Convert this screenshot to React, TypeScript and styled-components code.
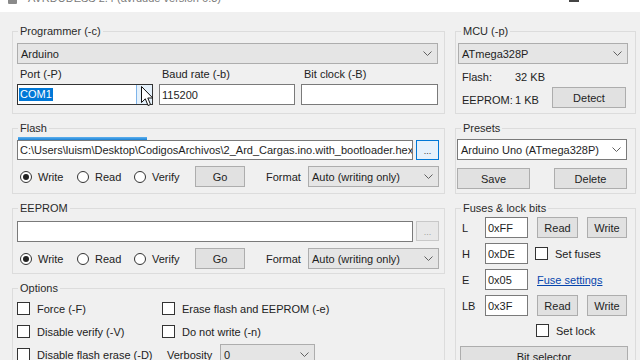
import React from 'react';
import styled, { createGlobalStyle } from 'styled-components';

const GlobalStyle = createGlobalStyle`
  html, body {
    margin: 0;
    padding: 0;
    background: #f0f0f0;
  }
  body {
    font-family: 'Liberation Sans', Arial, sans-serif;
    font-size: 11px;
    color: #222;
  }
`;

const Chevron: React.FC = () => (
  <ChevronSvg width='9' height='6' viewBox='0 0 9 6'>
    <path d='M0.5 0.5 L4.5 4.5 L8.5 0.5' fill='none' stroke='#606060' strokeWidth='1' />
  </ChevronSvg>
);

const Cursor: React.FC = () => (
  <CursorSvg width='13' height='21' viewBox='0 0 13 21'>
    <path
      d='M0.5 0.5 L0.5 16.5 L4.3 12.8 L7 19.5 L9.5 18.5 L6.8 12 L11.8 12 Z'
      fill='#fff'
      stroke='#111'
      strokeWidth='1'
      strokeLinejoin='round'
    />
  </CursorSvg>
);

const Radio: React.FC<{ checked?: boolean; label: string; w: number }> = ({ checked, label, w }) => (
  <RadioItem $w={w}>
    <Circle>{checked && <Dot />}</Circle>
    <span>{label}</span>
  </RadioItem>
);

const Check: React.FC<{ label: string; gap?: number }> = ({ label, gap }) => (
  <CheckItem $gap={gap}>
    <Box />
    <span>{label}</span>
  </CheckItem>
);

const OperationRow: React.FC = () => (
  <OptRow>
    <Radio checked label='Write' w={57} />
    <Radio label='Read' w={57} />
    <Radio label='Verify' w={61} />
    <Button $w={50}>Go</Button>
    <FormatLabel>Format</FormatLabel>
    <Combo $grow>
      Auto (writing only)
      <Chevron />
    </Combo>
  </OptRow>
);

const App: React.FC = () => {
  return (
    <Window>
      <GlobalStyle />
      <TitleBar>
        <AppIcon />
        <TitleText>AVRDUDESS 2.4 (avrdude version 6.3)</TitleText>
        <WinControls>
          <Minimize />
          <CloseGlyph>✕</CloseGlyph>
        </WinControls>
      </TitleBar>

      <Layout>
        <Group $col={1} $rows='1'>
          <Legend>Programmer (-c)</Legend>
          <Content $pad='5px 6px 0 4px'>
            <Combo>
              Arduino
              <Chevron />
            </Combo>
            <FieldRow>
              <div>
                <FieldLabel>Port (-P)</FieldLabel>
                <PortBox>
                  <Selected>COM1</Selected>
                  <DropButton />
                </PortBox>
              </div>
              <div>
                <FieldLabel>Baud rate (-b)</FieldLabel>
                <TextBox $h={21}>115200</TextBox>
              </div>
              <div>
                <FieldLabel>Bit clock (-B)</FieldLabel>
                <TextBox $h={21} />
              </div>
            </FieldRow>
          </Content>
        </Group>

        <Group $col={2} $rows='1'>
          <Legend>MCU (-p)</Legend>
          <Content $pad='5px 7px 0 2px'>
            <Combo>
              ATmega328P
              <Chevron />
            </Combo>
            <InfoArea>
              <InfoGrid>
                <span>Flash:</span>
                <span>32 KB</span>
                <span>EEPROM:</span>
                <span>1 KB</span>
              </InfoGrid>
              <DetectButton $w={74}>Detect</DetectButton>
            </InfoArea>
          </Content>
        </Group>

        <Group $col={1} $rows='2'>
          <Legend>Flash</Legend>
          <Content $pad='2px 5px 0 4px'>
            <Progress />
            <PathRow>
              <TextBox $grow>C:\Users\luism\Desktop\CodigosArchivos\2_Ard_Cargas.ino.with_bootloader.hex</TextBox>
              <Browse $focused>...</Browse>
            </PathRow>
            <OperationRow />
          </Content>
        </Group>

        <Group $col={2} $rows='2'>
          <Legend>Presets</Legend>
          <Content $pad='4px 8px 0 1px'>
            <Combo $white>
              Arduino Uno (ATmega328P)
              <Chevron />
            </Combo>
            <ButtonRow>
              <Button $w={73}>Save</Button>
              <Button $w={73}>Delete</Button>
            </ButtonRow>
          </Content>
        </Group>

        <Group $col={1} $rows='3'>
          <Legend>EEPROM</Legend>
          <Content $pad='6px 5px 0 4px'>
            <PathRow>
              <TextBox $grow $h={21} />
              <Browse>...</Browse>
            </PathRow>
            <OperationRow />
          </Content>
        </Group>

        <Group $col={2} $rows='3 / span 2'>
          <Legend>Fuses &amp; lock bits</Legend>
          <Content $pad='2px 7px 0 6px'>
            <FuseRows>
              <FuseRow>
                <FuseLabel>L</FuseLabel>
                <TextBox $w={43} $h={21}>0xFF</TextBox>
                <Button $w={41} $ml={9}>Read</Button>
                <Button $w={40} $ml={9}>Write</Button>
              </FuseRow>
              <FuseRow>
                <FuseLabel>H</FuseLabel>
                <TextBox $w={43} $h={21}>0xDE</TextBox>
                <FuseExtra $ml={7}>
                  <Check label='Set fuses' gap={7} />
                </FuseExtra>
              </FuseRow>
              <FuseRow>
                <FuseLabel>E</FuseLabel>
                <TextBox $w={43} $h={21}>0x05</TextBox>
                <FuseExtra $ml={9}>
                  <Link>Fuse settings</Link>
                </FuseExtra>
              </FuseRow>
              <FuseRow>
                <FuseLabel>LB</FuseLabel>
                <TextBox $w={43} $h={21}>0x3F</TextBox>
                <Button $w={41} $ml={9}>Read</Button>
                <Button $w={40} $ml={9}>Write</Button>
              </FuseRow>
            </FuseRows>
            <LockRow>
              <Check label='Set lock' gap={7} />
            </LockRow>
            <BitSelector>Bit selector</BitSelector>
          </Content>
        </Group>

        <Group $col={1} $rows='4'>
          <Legend>Options</Legend>
          <Content $pad='5px 6px 0 4px'>
            <OptionsGrid>
              <Check label='Force (-F)' />
              <Check label='Erase flash and EEPROM (-e)' />
              <Check label='Disable verify (-V)' />
              <Check label='Do not write (-n)' />
              <Check label='Disable flash erase (-D)' />
              <Verbosity>
                <VerbosityLabel>Verbosity</VerbosityLabel>
                <Combo $w={95}>
                  0
                  <Chevron />
                </Combo>
              </Verbosity>
            </OptionsGrid>
          </Content>
        </Group>
      </Layout>

      <Cursor />
    </Window>
  );
};

const Window = styled.div`
  position: relative;
  width: 640px;
  height: 360px;
  overflow: hidden;
  background: #f0f0f0;
`;

const TitleBar = styled.div`
  height: 12px;
  background: #ffffff;
  display: flex;
  align-items: flex-start;
  overflow: hidden;
  padding-left: 8px;
`;

const AppIcon = styled.div`
  width: 9px;
  height: 10px;
  margin-top: -6px;
  background: #8a8a8a;
  border-radius: 1px;
`;

const TitleText = styled.span`
  margin-top: -9px;
  margin-left: 11px;
  line-height: 14px;
  font-size: 11px;
  color: #7a7a7a;
  white-space: nowrap;
`;

const WinControls = styled.div`
  margin-left: auto;
  display: flex;
  align-items: flex-start;
  padding-right: 12px;
`;

const Minimize = styled.div`
  width: 10px;
  height: 2px;
  background: #444;
`;

const CloseGlyph = styled.span`
  margin-left: 38px;
  margin-top: -10px;
  font-size: 13px;
  line-height: 14px;
  color: #999;
`;

const Layout = styled.div`
  display: grid;
  grid-template-columns: 433px 181px;
  grid-template-rows: 89px 72px 72px 90px;
  column-gap: 10px;
  row-gap: 8px;
  padding: 13px 0 0 12px;
`;

const Group = styled.fieldset<{ $rows: string; $col: number }>`
  margin: 0;
  padding: 0;
  min-width: 0;
  border: 1px solid #dcdcdc;
  grid-column: ${(p) => p.$col};
  grid-row: ${(p) => p.$rows};
`;

const Legend = styled.legend`
  margin-left: 5px;
  padding: 0 2px;
  font-size: 11px;
  line-height: 13px;
  color: #2a2a2a;
`;

const Content = styled.div<{ $pad: string }>`
  display: flex;
  flex-direction: column;
  padding: ${(p) => p.$pad};
`;

const ChevronSvg = styled.svg`
  flex-shrink: 0;
  margin-right: 5px;
`;

const CursorSvg = styled.svg`
  position: absolute;
  left: 141px;
  top: 86px;
`;

const Combo = styled.div<{ $white?: boolean; $grow?: boolean; $w?: number }>`
  box-sizing: border-box;
  height: 21px;
  ${(p) => (p.$grow ? 'flex: 1;' : '')}
  ${(p) => (p.$w ? `width: ${p.$w}px;` : '')}
  border: 1px solid ${(p) => (p.$white ? '#7a7a7a' : '#adadad')};
  background: ${(p) => (p.$white ? '#ffffff' : '#e5e5e5')};
  display: flex;
  align-items: center;
  justify-content: space-between;
  padding-left: 3px;
  white-space: nowrap;
  color: #1e1e1e;
`;

const TextBox = styled.div<{ $w?: number; $h?: number; $grow?: boolean }>`
  box-sizing: border-box;
  height: ${(p) => p.$h ?? 20}px;
  ${(p) => (p.$w ? `width: ${p.$w}px; flex-shrink: 0;` : '')}
  ${(p) => (p.$grow ? 'flex: 1; min-width: 0;' : '')}
  border: 1px solid #7a7a7a;
  background: #ffffff;
  display: flex;
  align-items: center;
  padding: 0 2px;
  white-space: nowrap;
  overflow: hidden;
  color: #1e1e1e;
`;

const FieldRow = styled.div`
  display: grid;
  grid-template-columns: 136px 136px 1fr;
  column-gap: 6px;
  margin-top: 4px;
`;

const FieldLabel = styled.div`
  line-height: 13px;
  padding-left: 3px;
  margin-bottom: 3px;
`;

const PortBox = styled.div`
  box-sizing: border-box;
  height: 21px;
  border: 1px solid #333;
  background: #fff;
  display: flex;
  align-items: center;
  padding-left: 1px;
`;

const Selected = styled.span`
  background: #0078d7;
  color: #fff;
  padding: 0 1px;
  line-height: 13px;
`;

const DropButton = styled.div`
  margin-left: auto;
  width: 16px;
  height: 100%;
  box-sizing: border-box;
  border-left: 1px solid #7eb4ea;
  background: #e5f1fb;
`;

const InfoArea = styled.div`
  display: flex;
  justify-content: space-between;
  margin-top: 7px;
`;

const InfoGrid = styled.div`
  display: grid;
  grid-template-columns: 53px auto;
  row-gap: 8px;
  padding-left: 4px;
  line-height: 13px;
`;

const Button = styled.div<{ $w?: number; $ml?: number }>`
  box-sizing: border-box;
  height: 21px;
  ${(p) => (p.$w ? `width: ${p.$w}px;` : '')}
  margin-left: ${(p) => p.$ml ?? 0}px;
  flex-shrink: 0;
  border: 1px solid #adadad;
  background: #e1e1e1;
  display: flex;
  align-items: center;
  justify-content: center;
  color: #1e1e1e;
`;

const DetectButton = styled(Button)`
  margin-top: 16px;
  margin-right: 2px;
`;

const Progress = styled.div`
  width: 129px;
  height: 3px;
  margin-left: 1px;
  background: linear-gradient(#5fb0ee, #1c84d6);
`;

const PathRow = styled.div`
  display: flex;
  gap: 3px;
`;

const Browse = styled.div<{ $focused?: boolean }>`
  box-sizing: border-box;
  width: 23px;
  height: 20px;
  flex-shrink: 0;
  border: 1px solid ${(p) => (p.$focused ? '#0078d7' : '#c8c8c8')};
  background: ${(p) => (p.$focused ? '#e5f1fb' : '#e8e8e8')};
  color: ${(p) => (p.$focused ? '#333' : '#a0a0a0')};
  display: flex;
  align-items: flex-end;
  justify-content: center;
  font-size: 9px;
  line-height: 14px;
  padding-bottom: 1px;
`;

const OptRow = styled.div`
  display: flex;
  align-items: center;
  height: 21px;
  margin-top: 6px;
  padding-left: 3px;
`;

const RadioItem = styled.div<{ $w: number }>`
  width: ${(p) => p.$w}px;
  flex-shrink: 0;
  display: flex;
  align-items: center;
  gap: 6px;
`;

const Circle = styled.div`
  box-sizing: border-box;
  width: 12px;
  height: 12px;
  border: 1px solid #333;
  border-radius: 50%;
  background: #fff;
  display: flex;
  align-items: center;
  justify-content: center;
`;

const Dot = styled.div`
  width: 6px;
  height: 6px;
  border-radius: 50%;
  background: #222;
`;

const FormatLabel = styled.span`
  width: 42px;
  margin-left: 21px;
  flex-shrink: 0;
`;

const ButtonRow = styled.div`
  display: flex;
  justify-content: space-between;
  margin-top: 8px;
`;

const FuseRows = styled.div`
  display: flex;
  flex-direction: column;
  gap: 5px;
`;

const FuseRow = styled.div`
  display: flex;
  align-items: center;
  height: 21px;
`;

const FuseLabel = styled.span`
  width: 23px;
  flex-shrink: 0;
`;

const FuseExtra = styled.div<{ $ml: number }>`
  margin-left: ${(p) => p.$ml}px;
`;

const Link = styled.span`
  color: #0645ad;
  text-decoration: underline;
`;

const CheckItem = styled.div<{ $gap?: number }>`
  display: flex;
  align-items: center;
  gap: ${(p) => p.$gap ?? 7}px;
  white-space: nowrap;
`;

const Box = styled.div`
  box-sizing: border-box;
  width: 13px;
  height: 13px;
  border: 1px solid #333;
  background: #fff;
  flex-shrink: 0;
`;

const LockRow = styled.div`
  margin-top: 8px;
  padding-left: 74px;
`;

const BitSelector = styled(Button)`
  width: 168px;
  height: 22px;
  margin-top: 9px;
  margin-left: -2px;
`;

const OptionsGrid = styled.div`
  display: grid;
  grid-template-columns: 145px 1fr;
  grid-auto-rows: 17px;
  row-gap: 6px;
  align-items: center;
`;

const Verbosity = styled.div`
  display: flex;
  align-items: center;
`;

const VerbosityLabel = styled.span`
  width: 53px;
  margin-left: 5px;
  flex-shrink: 0;
`;

export default App;
